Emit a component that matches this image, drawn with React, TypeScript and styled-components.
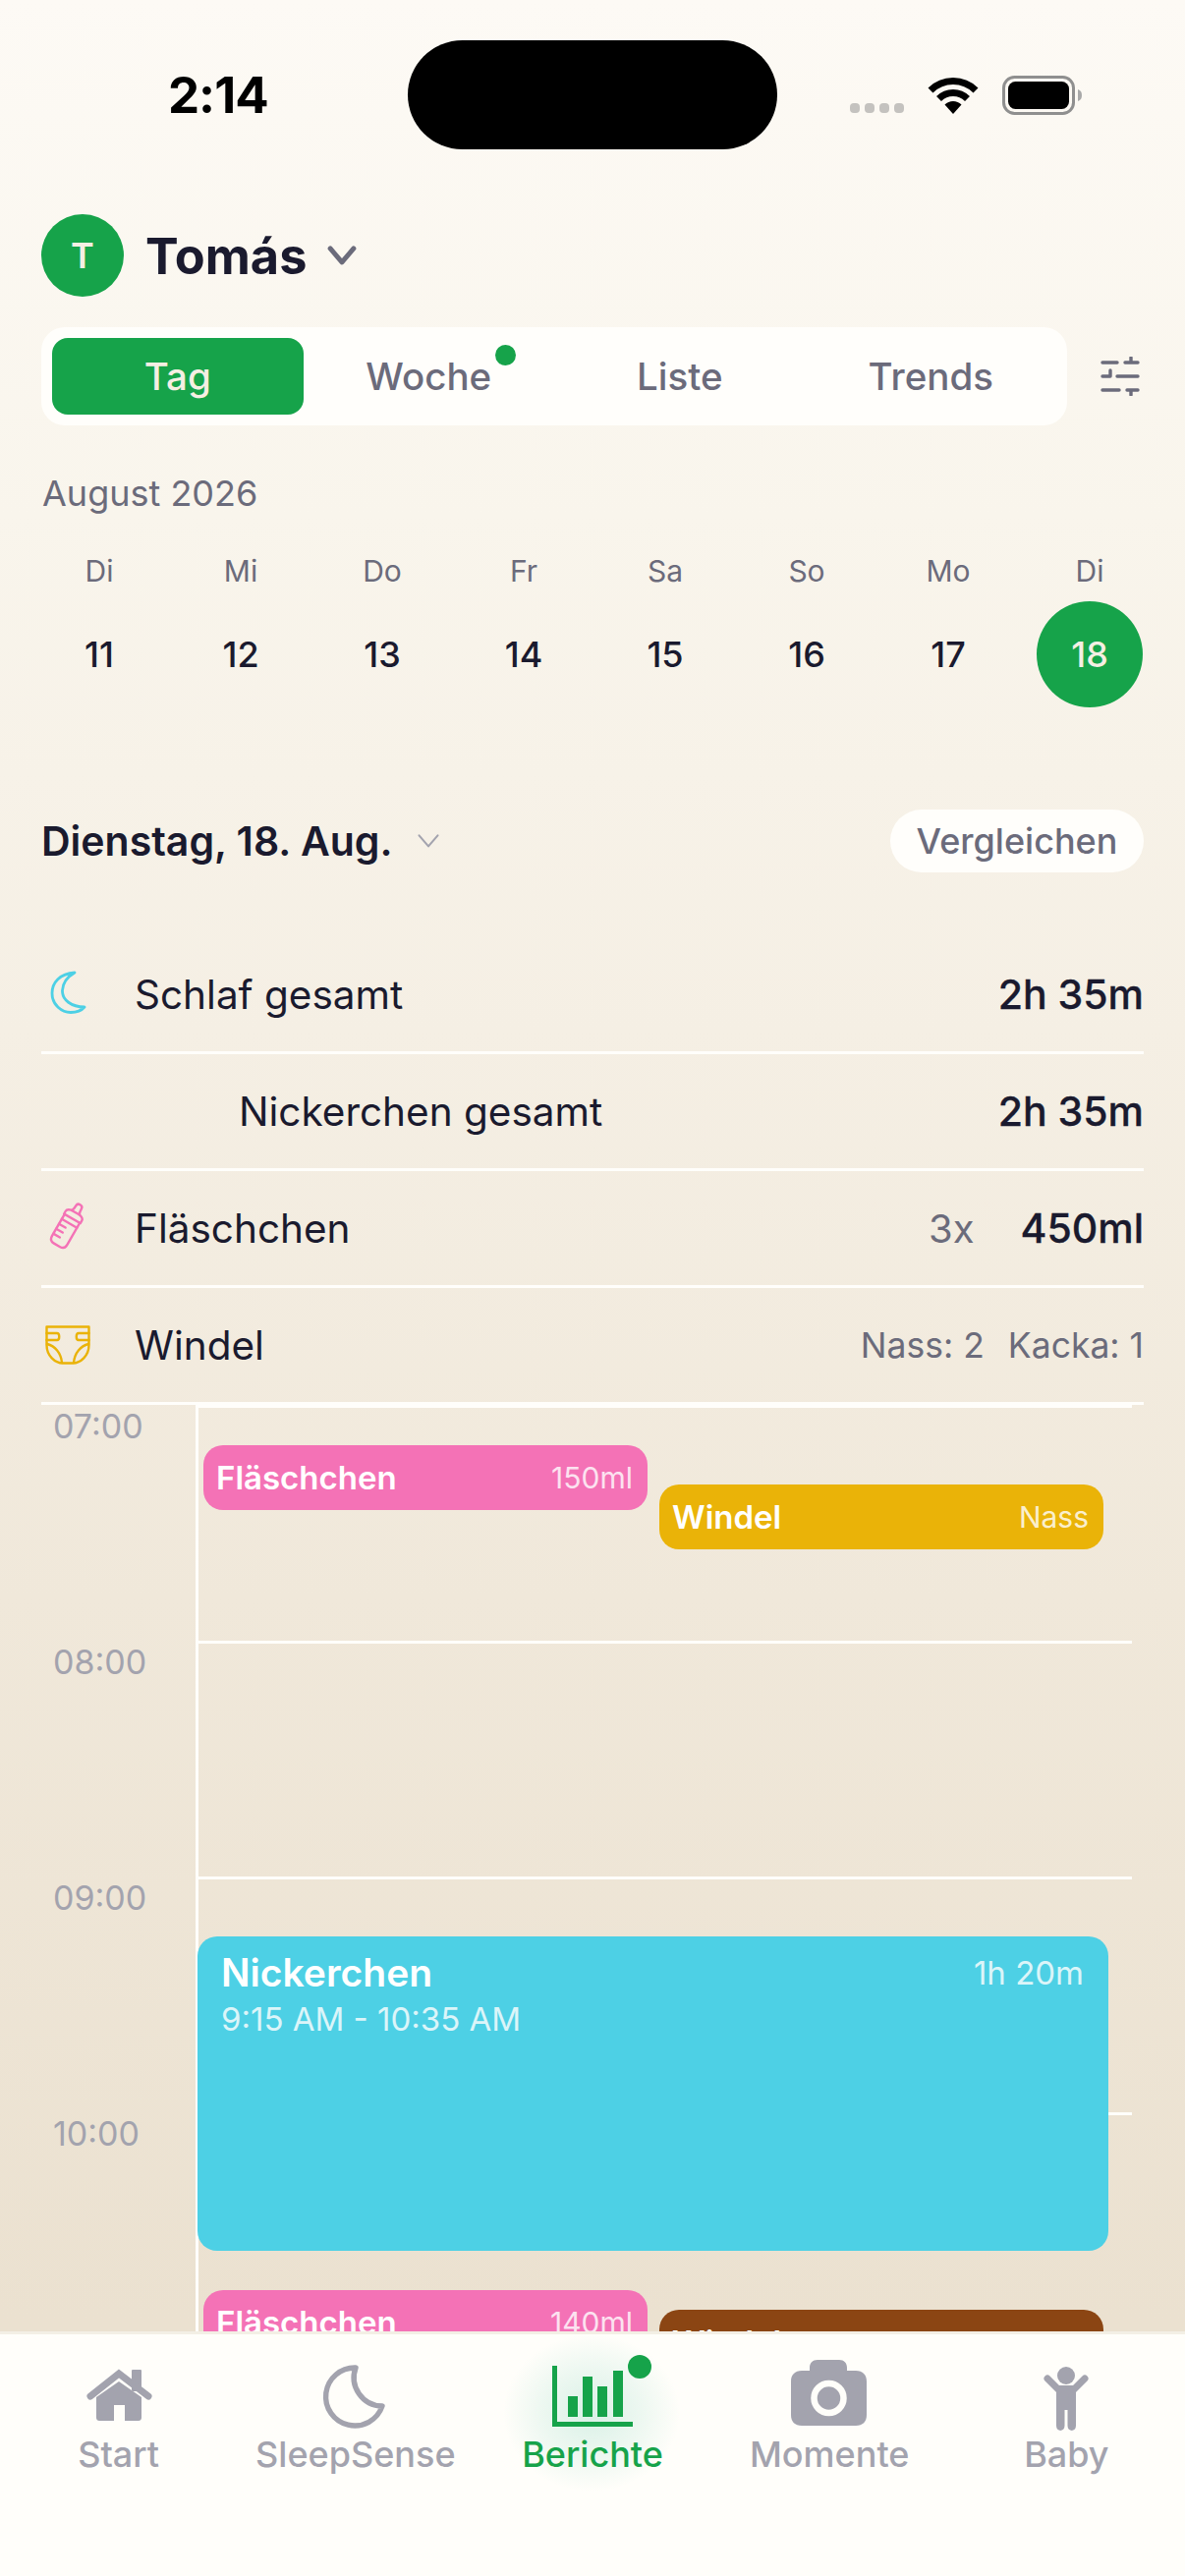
import React from 'react'
import styled, { createGlobalStyle } from 'styled-components'

const GlobalStyle = createGlobalStyle`
  html, body {
    margin: 0;
    padding: 0;
    background: #fdf9f3;
  }
  * {
    box-sizing: border-box;
  }
`

const DARK = '#1a1a2e'
const GREY = '#6b6b7b'
const MUTED = '#a3a3ae'
const GREEN = '#16a34a'

const days = [
  { name: 'Di', num: 11 },
  { name: 'Mi', num: 12 },
  { name: 'Do', num: 13 },
  { name: 'Fr', num: 14 },
  { name: 'Sa', num: 15 },
  { name: 'So', num: 16 },
  { name: 'Mo', num: 17 },
  { name: 'Di', num: 18, active: true },
]

const hours = ['07:00', '08:00', '09:00', '10:00']

const events = [
  { title: 'Fläschchen', note: '150ml', color: '#f472b6', top: 41, left: 207 },
  { title: 'Windel', note: 'Nass', color: '#eab308', top: 81, left: 671 },
  { title: 'Fläschchen', note: '140ml', color: '#f472b6', top: 901, left: 207 },
  { title: 'Windel', note: 'Kacka', color: '#8b4513', top: 921, left: 671 },
]

const MoonPath = 'M50 13 A29.5 29.5 0 1 0 77 52 A29 29 0 0 1 50 13 Z'

const Avatar = () => (
  <AvatarCircle>T</AvatarCircle>
)

const Wifi = () => (
  <svg width="52" height="38" viewBox="0 0 52 38" fill="none" stroke="#000" strokeWidth="7">
    <path d="M3 14 A32.5 32.5 0 0 1 49 14" />
    <path d="M11.5 22.5 A20.5 20.5 0 0 1 40.5 22.5" />
    <path d="M17.5 28.5 A12 12 0 0 1 34.5 28.5 L26 38 Z" fill="#000" stroke="none" />
  </svg>
)

const Battery = () => (
  <svg width="82" height="40" viewBox="0 0 82 40" fill="none">
    <rect x="1.5" y="1.5" width="71" height="37" rx="11" stroke="#8f8f8f" strokeWidth="3" />
    <rect x="6" y="6" width="62" height="28" rx="7.5" fill="#000" />
    <path d="M77 14 C80 15 81 17 81 20 C81 23 80 25 77 26 Z" fill="#a8a8a8" />
  </svg>
)

const FilterIcon = () => (
  <svg width="40" height="40" viewBox="0 0 40 40" fill="none" stroke={GREY} strokeWidth="3.4" strokeLinecap="round">
    <path d="M2 6 H17 M25 6 H38 M31 1 V6" />
    <path d="M2 20 H9 M17 20 H38 M10 14 V20" />
    <path d="M2 34 H19 M27 34 H38 M31 34 V39" />
  </svg>
)

const Chevron = ({ size, color, width }: { size: number; color: string; width: number }) => (
  <svg width={size} height={size * 0.66} viewBox="0 0 30 20" fill="none" stroke={color} strokeWidth={width} strokeLinecap="round" strokeLinejoin="round">
    <path d="M3 3 L15 17 L27 3" />
  </svg>
)

const RowMoon = () => (
  <RowMoonSvg width="37" height="45" viewBox="0 0 37 45" fill="none" stroke="#4dd0e5" strokeWidth="2.8" strokeLinejoin="round">
    <path d="M25 2 C10 3 2 12 2 23 C2 35 12 42.5 21 42.5 C27 42.5 32 40.5 35 37 C22 37 12 30 12.5 20 C13 12 18 6 25 2 Z" />
  </RowMoonSvg>
)

const RowBottle = () => (
  <RowBottleSvg width="46" height="56" viewBox="0 0 36 44" fill="none" stroke="#f472b6" strokeWidth="1.9" strokeLinecap="round" strokeLinejoin="round">
    <g transform="rotate(30 18 22)">
      <path d="M11 15 H25 V35 C25 38 23.5 39.5 21 39.5 H15 C12.5 39.5 11 38 11 35 Z" />
      <path d="M10.5 15 V12.5 C10.5 11 12 10 14 9.5 H22 C24 10 25.5 11 25.5 12.5 V15" />
      <path d="M14.5 9.5 C15.5 8 15.5 6 15.5 4.5 C15.5 1.5 20.5 1.5 20.5 4.5 C20.5 6 20.5 8 21.5 9.5" />
      <path d="M11 19.5 H25 M11 24 H17 M11 28.5 H17 M11 33 H17" />
    </g>
  </RowBottleSvg>
)

const RowDiaper = () => (
  <svg width="46" height="40" viewBox="0 0 46 40" fill="none" stroke="#eab308" strokeWidth="2.4" strokeLinecap="round" strokeLinejoin="round">
    <path d="M1.5 1.5 H44.5 V20 C44.5 31 36 38.5 28 38.5 H18 C10 38.5 1.5 31 1.5 20 Z" />
    <path d="M1.5 8 H12 C15 8 15 15 12 15 H1.5" />
    <path d="M44.5 8 H34 C31 8 31 15 34 15 H44.5" />
    <path d="M2 19 C10 21 16 28 17 38" />
    <path d="M44 19 C36 21 30 28 29 38" />
  </svg>
)

const HomeIcon = () => (
  <NavSvg viewBox="0 0 100 84" fill={MUTED}>
    <rect x="63" y="15" width="10" height="22" rx="1" />
    <path d="M21 42 L50 19 L80 42" fill="none" stroke={MUTED} strokeWidth="7" strokeLinecap="round" />
    <path d="M27 43 L50 27 L73 43 V64 C73 66 71.5 67 70 67 H56 V51 H45 V67 H30 C28.5 67 27 66 27 64 Z" />
  </NavSvg>
)

const SleepIcon = () => (
  <NavSvg viewBox="0 0 100 84" fill="none" stroke={MUTED} strokeWidth="5.4" strokeLinejoin="round">
    <path d={MoonPath} />
  </NavSvg>
)

const ChartIcon = () => (
  <NavSvg viewBox="0 0 100 84" fill={GREEN}>
    <rect x="9" y="11" width="5" height="62" />
    <rect x="9" y="68" width="82" height="5" />
    <rect x="25" y="42" width="10" height="21" />
    <rect x="40" y="22" width="10" height="41" />
    <rect x="55" y="32" width="10" height="31" />
    <rect x="71" y="16" width="10" height="47" />
  </NavSvg>
)

const CameraIcon = () => (
  <NavSvg viewBox="0 0 100 84" fill={MUTED}>
    <path d="M30 16 V13 C30 8 33 5 38 5 H60 C65 5 68 8 68 13 V16 H77 C84 16 88 20 88 27 V61 C88 68 84 72 77 72 H22 C15 72 11 68 11 61 V27 C11 20 15 16 22 16 Z" />
    <circle cx="49.5" cy="44" r="15" fill="none" stroke="#fffefa" strokeWidth="6.5" />
  </NavSvg>
)

const BabyIcon = () => (
  <NavSvg viewBox="0 0 100 84" fill={MUTED}>
    <circle cx="50" cy="21" r="9" />
    <path d="M31 24 L43 36 M69 24 L57 36" fill="none" stroke={MUTED} strokeWidth="7" strokeLinecap="round" />
    <path d="M40 31 H60 V72 C60 78.5 51.5 78.5 51.5 72 V56 H48.5 V72 C48.5 78.5 40 78.5 40 72 Z" />
  </NavSvg>
)

export default function App() {
  return (
    <>
      <GlobalStyle />
      <Screen>
        <Content>
          <StatusBar>
            <Time>2:14</Time>
            <Island />
            <StatusIcons>
              <SignalDots>
                <i />
                <i />
                <i />
                <i />
              </SignalDots>
              <Wifi />
              <Battery />
            </StatusIcons>
          </StatusBar>

          <ProfileRow>
            <Avatar />
            <ProfileName>Tomás</ProfileName>
            <Chevron size={30} color={GREY} width={5} />
          </ProfileRow>

          <TabsRow>
            <Tabs>
              <Tab $active>Tag</Tab>
              <Tab>
                Woche
                <TabDot />
              </Tab>
              <Tab>Liste</Tab>
              <Tab>Trends</Tab>
            </Tabs>
            <FilterIcon />
          </TabsRow>

          <MonthLabel>August 2026</MonthLabel>
          <WeekGrid>
            {days.map((d) => (
              <DayCell key={d.num}>
                <DayName>{d.name}</DayName>
                <DayNumber $active={d.active}>{d.num}</DayNumber>
              </DayCell>
            ))}
          </WeekGrid>

          <DateRow>
            <DateTitle>
              Dienstag, 18. Aug.
              <Chevron size={24} color={MUTED} width={2.6} />
            </DateTitle>
            <CompareButton>Vergleichen</CompareButton>
          </DateRow>

          <Summary>
            <SummaryRow>
              <RowIcon>
                <RowMoon />
              </RowIcon>
              <RowLabel>Schlaf gesamt</RowLabel>
              <RowValue>2h 35m</RowValue>
            </SummaryRow>
            <SummaryRow>
              <RowLabel $indent>Nickerchen gesamt</RowLabel>
              <RowValue>2h 35m</RowValue>
            </SummaryRow>
            <SummaryRow>
              <RowIcon>
                <RowBottle />
              </RowIcon>
              <RowLabel>Fläschchen</RowLabel>
              <RowCount>3x</RowCount>
              <RowValue>450ml</RowValue>
            </SummaryRow>
            <SummaryRow>
              <RowIcon>
                <RowDiaper />
              </RowIcon>
              <RowLabel>Windel</RowLabel>
              <RowDetail>Nass: 2</RowDetail>
              <RowDetail>Kacka: 1</RowDetail>
            </SummaryRow>
          </Summary>

          <Timeline>
            {hours.map((h) => (
              <HourRow key={h}>
                <HourLabel>{h}</HourLabel>
                <HourTrack />
              </HourRow>
            ))}
            {events.map((e, i) => (
              <EventCard key={i} $color={e.color} $top={e.top} $left={e.left}>
                <EventTitle>{e.title}</EventTitle>
                <EventNote>{e.note}</EventNote>
              </EventCard>
            ))}
            <NapCard>
              <NapHead>
                <NapTitle>Nickerchen</NapTitle>
                <NapNote>1h 20m</NapNote>
              </NapHead>
              <NapNote>9:15 AM - 10:35 AM</NapNote>
            </NapCard>
          </Timeline>
        </Content>

        <BottomNav>
          <NavItem>
            <HomeIcon />
            <NavLabel>Start</NavLabel>
          </NavItem>
          <NavItem>
            <SleepIcon />
            <NavLabel>SleepSense</NavLabel>
          </NavItem>
          <NavItem $active>
            <NavGlow />
            <ChartIcon />
            <NavDot />
            <NavLabel>Berichte</NavLabel>
          </NavItem>
          <NavItem>
            <CameraIcon />
            <NavLabel>Momente</NavLabel>
          </NavItem>
          <NavItem>
            <BabyIcon />
            <NavLabel>Baby</NavLabel>
          </NavItem>
        </BottomNav>
      </Screen>
    </>
  )
}

const Screen = styled.div`
  display: flex;
  flex-direction: column;
  width: 1206px;
  height: 2622px;
  overflow: hidden;
  font-family: Inter, 'Noto Sans', sans-serif;
  color: ${DARK};
  background: linear-gradient(180deg, #fdfaf5 0%, #f9f5ec 20%, #f5efe4 40%, #f0e8da 62%, #ebe1d0 90%);
`

const Content = styled.div`
  flex: 1;
  min-height: 0;
  overflow: hidden;
`

const StatusBar = styled.div`
  display: flex;
  padding-top: 41px;
  height: 152px;
`

const Time = styled.div`
  width: 415px;
  padding: 30px 0 0 171px;
  font-size: 51px;
  line-height: 52px;
  font-weight: 700;
  color: #000;
  letter-spacing: -1px;
`

const Island = styled.div`
  width: 376px;
  height: 111px;
  border-radius: 56px;
  background: #000;
`

const StatusIcons = styled.div`
  display: flex;
  align-items: center;
  height: 111px;
  padding-left: 74px;
  gap: 24px;
`

const SignalDots = styled.div`
  display: flex;
  gap: 5px;
  margin-top: 26px;

  i {
    display: block;
    width: 10px;
    height: 10px;
    border-radius: 4px;
    background: #c4c2bf;
  }
`

const ProfileRow = styled.div`
  display: flex;
  align-items: center;
  margin-top: 66px;
  padding-left: 42px;
  height: 84px;
`

const AvatarCircle = styled.div`
  display: flex;
  align-items: center;
  justify-content: center;
  width: 84px;
  height: 84px;
  border-radius: 50%;
  background: ${GREEN};
  color: #f5efe3;
  font-size: 36px;
  font-weight: 600;
`

const ProfileName = styled.div`
  margin: 0 21px 0 22px;
  font-size: 50.5px;
  font-weight: 700;
`

const TabsRow = styled.div`
  display: flex;
  align-items: center;
  margin-top: 31px;
  padding-left: 42px;
  gap: 34px;
`

const Tabs = styled.div`
  display: grid;
  grid-template-columns: repeat(4, 1fr);
  width: 1044px;
  height: 100px;
  padding: 11px;
  border-radius: 24px;
  background: #fffefb;
`

const Tab = styled.div<{ $active?: boolean }>`
  position: relative;
  display: flex;
  align-items: center;
  justify-content: center;
  border-radius: 16px;
  font-size: 38.5px;
  font-weight: 450;
  color: ${(p) => (p.$active ? '#f5efe3' : GREY)};
  background: ${(p) => (p.$active ? GREEN : 'transparent')};
`

const TabDot = styled.span`
  position: absolute;
  top: 7px;
  left: 195px;
  width: 21px;
  height: 21px;
  border-radius: 50%;
  background: ${GREEN};
`

const MonthLabel = styled.div`
  margin: 48px 0 0 43px;
  font-size: 36px;
  line-height: 42px;
  color: ${GREY};
`

const WeekGrid = styled.div`
  display: grid;
  grid-template-columns: repeat(8, 144px);
  margin-top: 40px;
  padding-left: 29px;
`

const DayCell = styled.div`
  display: flex;
  flex-direction: column;
  align-items: center;
`

const DayName = styled.div`
  font-size: 30px;
  line-height: 36px;
  color: ${GREY};
`

const DayNumber = styled.div<{ $active?: boolean }>`
  display: flex;
  align-items: center;
  justify-content: center;
  width: 108px;
  height: 108px;
  margin-top: 13px;
  border-radius: 50%;
  font-size: 36px;
  font-weight: 500;
  color: ${(p) => (p.$active ? '#f5efe3' : DARK)};
  background: ${(p) => (p.$active ? GREEN : 'transparent')};
`

const DateRow = styled.div`
  display: flex;
  align-items: center;
  justify-content: space-between;
  margin-top: 104px;
  padding: 0 42px;
`

const DateTitle = styled.div`
  display: flex;
  align-items: center;
  gap: 24px;
  font-size: 41px;
  font-weight: 600;
`

const CompareButton = styled.div`
  display: flex;
  align-items: center;
  justify-content: center;
  width: 258px;
  height: 64px;
  border-radius: 32px;
  background: #fffefb;
  font-size: 36px;
  font-weight: 500;
  color: ${GREY};
`

const Summary = styled.div`
  margin: 66px 42px 0;
`

const SummaryRow = styled.div`
  display: flex;
  align-items: center;
  height: 119px;
  border-bottom: 3px solid #fffefb;
`

const RowIcon = styled.div`
  display: flex;
  align-items: center;
  justify-content: center;
  flex: none;
  width: 54px;
  margin-right: 41px;
`

const RowMoonSvg = styled.svg`
  margin-bottom: 4px;
`

const RowBottleSvg = styled.svg`
  margin-bottom: 4px;
`

const RowLabel = styled.div<{ $indent?: boolean }>`
  flex: 1;
  padding-left: ${(p) => (p.$indent ? '201px' : '0')};
  font-size: 40.5px;
`

const RowValue = styled.div`
  font-size: 41px;
  font-weight: 500;
  -webkit-text-stroke: 0.3px ${DARK};
`

const RowCount = styled.div`
  margin-right: 47px;
  font-size: 40px;
  color: ${GREY};
`

const RowDetail = styled.div`
  margin-left: 24px;
  font-size: 35.5px;
  color: ${GREY};
`

const Timeline = styled.div`
  position: relative;
  padding-left: 42px;
`

const HourRow = styled.div`
  display: flex;
  height: 240px;
`

const HourLabel = styled.div`
  flex: none;
  width: 157px;
  padding: 0 0 0 12px;
  font-size: 34px;
  line-height: 44px;
  color: ${MUTED};
`

const HourTrack = styled.div`
  width: 953px;
  border-top: 3px solid #fffefb;
  border-left: 3px solid #fffefb;
`

const EventCard = styled.div<{ $color: string; $top: number; $left: number }>`
  position: absolute;
  top: ${(p) => p.$top}px;
  left: ${(p) => p.$left}px;
  display: flex;
  align-items: center;
  justify-content: space-between;
  width: 452px;
  height: 66px;
  padding: 0 15px 0 13px;
  border-radius: 20px;
  background: ${(p) => p.$color};
  color: #fff;
`

const EventTitle = styled.div`
  font-size: 33px;
  font-weight: 600;
`

const EventNote = styled.div`
  font-size: 30px;
  opacity: 0.8;
`

const NapCard = styled.div`
  position: absolute;
  top: 541px;
  left: 201px;
  width: 927px;
  height: 320px;
  padding: 14px 25px 0 24px;
  border-radius: 20px;
  background: #4dd0e5;
  color: #fff;
`

const NapHead = styled.div`
  display: flex;
  align-items: center;
  justify-content: space-between;
  margin-bottom: 4px;
`

const NapTitle = styled.div`
  font-size: 39px;
  line-height: 46px;
  font-weight: 600;
`

const NapNote = styled.div`
  font-size: 33px;
  line-height: 40px;
  opacity: 0.8;
`

const BottomNav = styled.div`
  display: flex;
  flex: none;
  height: 249px;
  border-top: 3px solid #f3efe5;
  background: #fffefa;
`

const NavItem = styled.div<{ $active?: boolean }>`
  position: relative;
  flex: 1;
  display: flex;
  flex-direction: column;
  align-items: center;
  padding-top: 21px;
  color: ${(p) => (p.$active ? GREEN : MUTED)};
`

const NavSvg = styled.svg`
  position: relative;
  display: block;
  width: 100px;
  height: 84px;
`

const NavLabel = styled.div`
  position: relative;
  font-size: 36px;
  line-height: 34px;
  font-weight: 500;
`

const NavGlow = styled.div`
  position: absolute;
  top: 0;
  left: 30px;
  width: 180px;
  height: 160px;
  border-radius: 50%;
  background: radial-gradient(closest-side, rgba(20, 170, 130, 0.16), rgba(20, 170, 130, 0.08) 55%, rgba(20, 170, 130, 0));
`

const NavDot = styled.span`
  position: absolute;
  top: 21px;
  left: 157px;
  width: 24px;
  height: 24px;
  border-radius: 50%;
  background: ${GREEN};
`
